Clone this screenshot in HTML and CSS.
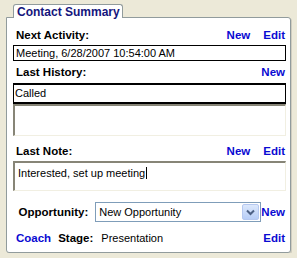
FILE: index.html
```html
<!DOCTYPE html>
<html>
	<head>
		<meta charset="utf-8">
		<title>Contact Summary</title>
		<link rel="stylesheet" href="styles.css">
	</head>
	<body>
		<div class="tab">Contact Summary</div>
		<div class="panel">

			<!-- next activity -->
			<div class="head first">
				<span class="label">Next Activity:</span>
				<span class="links"><a>New</a><a>Edit</a></span>
			</div>
			<div class="field">Meeting, 6/28/2007 10:54:00 AM</div>

			<!-- last history -->
			<div class="head">
				<span class="label">Last History:</span>
				<span class="links"><a>New</a></span>
			</div>
			<div class="field called">Called</div>
			<div class="memo empty"></div>

			<!-- last note -->
			<div class="head note-head">
				<span class="label">Last Note:</span>
				<span class="links"><a>New</a><a>Edit</a></span>
			</div>
			<div class="memo note">Interested, set up meeting<span class="caret"></span></div>

			<!-- opportunity -->
			<div class="opp">
				<span class="opp-label">Opportunity:</span>
				<div class="select">
					<span class="select-text">New Opportunity</span>
					<span class="select-btn">
						<svg width="9" height="7" viewBox="0 0 9 7"><path d="M1 1.5 L4.5 5 L8 1.5" fill="none" stroke="#4d6185" stroke-width="2"/></svg>
					</span>
				</div>
				<a class="link">New</a>
			</div>

			<!-- stage -->
			<div class="stage">
				<a class="link">Coach</a>
				<span class="label stage-label">Stage:</span>
				<span class="stage-val">Presentation</span>
				<a class="link push">Edit</a>
			</div>
		</div>
	</body>
</html>
```

FILE: styles.css
```css
body{
	margin: 0;
	background-color: #ece9d8;
	font-family: "Liberation Sans", Arial, sans-serif;
	font-size: 11px;
	color: #000;
}

/* tab on top of the panel */
.tab{
	position: relative;
	z-index: 1;
	margin: 4px 0 -1px 13px;
	width: 105px;
	height: 13px;
	padding-left: 3px;
	background-color: #fff;
	border: 1px solid #919b9c;
	border-bottom: none;
	border-radius: 3px 3px 0 0;
	color: #14157c;
	font-weight: bold;
	font-size: 12px;
	line-height: 14px;
}

.panel{
	margin-left: 6px;
	width: 273px;
	height: 234px;
	padding: 0 4px 0 6px;
	background-color: #fff;
	border: 1px solid #919b9c;
	border-radius: 0 3px 3px 3px;
	box-shadow: 1px 1px 0 #d0cdbf;
}

.head{
	display: flex;
	align-items: flex-end;
	height: 13px;
	margin-top: 5px;
	padding: 0 1px 0 3px;
	line-height: 13px;
}
.head.first{
	margin-top: 11px;
}
.head.note-head{
	margin-top: 9px;
}

.label{
	font-weight: bold;
	font-size: 11.5px;
}

.links{
	margin-left: auto;
}
.links a,
.link{
	color: #0a0ad2;
	font-weight: bold;
	font-size: 11.5px;
	cursor: pointer;
}
.links a + a{
	margin-left: 13px;
}

.field{
	margin-top: 3px;
	height: 14px;
	padding-left: 2px;
	border: 1px solid #000;
	line-height: 14px;
	white-space: nowrap;
	overflow: hidden;
}
.field.called{
	height: 17px;
	margin-top: 4px;
	border-width: 2px 1px;
	line-height: 16px;
	padding-left: 1px;
}

/* sunken read-only boxes */
.memo{
	height: 27px;
	padding: 2px 0 0 3px;
	border-style: solid;
	border-width: 2px 1px 1px 2px;
	border-color: #878577 #f1efe2 #f1efe2 #878577;
	line-height: 16px;
}
.memo.note{
	margin-top: 3px;
	height: 25px;
}
.caret{
	display: inline-block;
	width: 1px;
	height: 12px;
	margin-left: 1px;
	background-color: #000;
	vertical-align: -2px;
}

.opp{
	display: flex;
	align-items: center;
	margin-top: 11px;
	height: 20px;
}
.opp-label{
	width: 77px;
	text-align: right;
	font-weight: bold;
	font-size: 11.5px;
}
.select{
	display: flex;
	margin-left: 7px;
	width: 168px;
	height: 18px;
	border: 1px solid #7f9db9;
}
.select-text{
	flex: 1;
	padding-left: 3px;
	line-height: 18px;
}
.select-btn{
	display: flex;
	align-items: center;
	justify-content: center;
	width: 15px;
	margin: 1px;
	background: linear-gradient(#dce8fc, #b7cdf7);
	border: 1px solid #b5c8f0;
	border-radius: 2px;
}
.opp .link{
	margin-left: auto;
	margin-right: 1px;
}

.stage{
	display: flex;
	align-items: center;
	margin-top: 9px;
	padding: 0 1px 0 3px;
	height: 14px;
}
.stage-label{
	margin-left: 7px;
}
.stage-val{
	margin-left: 8px;
}
.push{
	margin-left: auto;
}
```
